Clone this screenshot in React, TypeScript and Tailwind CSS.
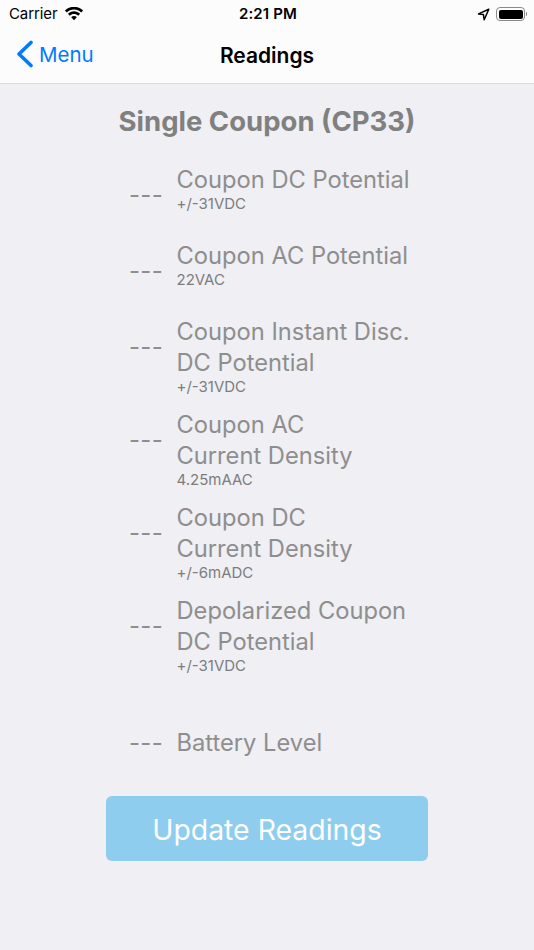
const readings = [
  { lines: ['Coupon DC Potential'], range: '+/-31VDC', tall: false },
  { lines: ['Coupon AC Potential'], range: '22VAC', tall: false },
  { lines: ['Coupon Instant Disc.', 'DC Potential'], range: '+/-31VDC', tall: true },
  { lines: ['Coupon AC', 'Current Density'], range: '4.25mAAC', tall: true },
  { lines: ['Coupon DC', 'Current Density'], range: '+/-6mADC', tall: true },
  { lines: ['Depolarized Coupon', 'DC Potential'], range: '+/-31VDC', tall: true },
]

function Wifi() {
  return (
    <svg width="20" height="15" viewBox="0 0 20 15" fill="#000">
      <path d="M10 2.600c2.800 0 5.300 1.100 7.200 2.900l1.900-2C16.700 1.100 13.500-.2 10-.2S3.300 1.100.900 3.500l1.900 2C4.700 3.700 7.200 2.600 10 2.600z" />
      <path d="M10 7.100c1.600 0 3.100.6 4.200 1.700l1.900-2C14.500 5.200 12.400 4.300 10 4.300S5.500 5.200 3.900 6.800l1.900 2C6.900 7.700 8.400 7.100 10 7.100z" />
      <path d="M10 9.100c-1.100 0-2.100.4-2.800 1.200L10 13.300l2.800-3c-.7-.8-1.700-1.200-2.800-1.200z" />
    </svg>
  )
}

function LocationArrow() {
  return (
    <svg width="13" height="13" viewBox="0 0 13 13" fill="none" stroke="#000" strokeWidth="1.500" strokeLinejoin="round">
      <path d="M11.800 1.200 1.500 5.900l4.900.7.800 5.200z" />
    </svg>
  )
}

function Battery() {
  return (
    <div className="flex items-center">
      <div className="w-[29px] h-[14px] rounded-[4px] border border-[#8a8a8a] p-[1.500px]">
        <div className="w-full h-full rounded-[2px] bg-black" />
      </div>
      <div className="w-[1.500px] h-[4px] bg-[#8a8a8a] rounded-r-sm ml-[0.500px]" />
    </div>
  )
}

export default function App() {
  return (
    <div className="w-[534px] h-[950px] bg-[#efeff4] flex flex-col font-['Inter',sans-serif] overflow-hidden">
      {/* Barra de status + navegacao */}
      <div className="bg-[#fcfcfc] border-b border-[#d9d9dc] h-[84px] shrink-0 flex flex-col">
        <div className="h-[28px] flex items-center pl-[9px] pr-[7px] text-black">
          <div className="flex-1 flex items-center gap-[7px]">
            <span className="text-[15px] tracking-[-0.100px]">Carrier</span>
            <Wifi />
          </div>
          <span className="text-[15px] font-semibold tracking-[0.150px]">2:21 PM</span>
          <div className="flex-1 flex items-center justify-end gap-[6px]">
            <LocationArrow />
            <Battery />
          </div>
        </div>
        <div className="relative flex-1 flex items-center justify-center">
          <div className="absolute left-[16px] top-[12px] flex items-center gap-[5px] text-[#007aff]">
            <svg width="18" height="28" viewBox="0 0 18 28" fill="none" stroke="#007aff" strokeWidth="3.600" strokeLinecap="round" strokeLinejoin="round">
              <path d="M15 2.500 3 14l12 11.500" />
            </svg>
            <span className="text-[20.500px] leading-[26px] mt-[1px]">Menu</span>
          </div>
          <span className="text-[21px] font-semibold text-black">Readings</span>
        </div>
      </div>

      <div className="flex-1 flex flex-col items-center">
        <h1 className="mt-[19px] h-[36px] text-[27.500px] leading-[36px] font-bold text-[#808080]">Single Coupon (CP33)</h1>

        <div className="w-full mt-[25px] pl-[130px]">
          {readings.map(r => (
            <div key={r.lines[0]} className={`flex items-start gap-[15px] ${r.tall ? 'h-[93px]' : 'h-[76px]'}`}>
              <span className="w-[32px] mt-[16px] text-[24px] leading-[30px] text-[#8e8e8e] tracking-[0.300px] whitespace-nowrap -ml-[1px] mr-[1px]">---</span>
              <div className="flex flex-col pt-[1px] -ml-[0.500px]">
                {r.lines.map(line => (
                  <span key={line} className="text-[23.700px] leading-[30.500px] text-[#8e8e8e] whitespace-nowrap">{line}</span>
                ))}
                <span className="text-[15px] leading-[16px] mt-[0.500px] text-[#7d7d7d]">{r.range}</span>
              </div>
            </div>
          ))}

          <div className="flex items-center gap-[15px] mt-[40px] h-[30px]">
            <span className="w-[32px] text-[24px] leading-[30px] text-[#8e8e8e] tracking-[0.300px] whitespace-nowrap -ml-[1px] mr-[1px]">---</span>
            <span className="text-[23.700px] leading-[30px] text-[#8e8e8e] -ml-[0.500px]">Battery Level</span>
          </div>
        </div>

        <button className="mt-[38px] w-[322px] h-[65px] pt-[3px] rounded-[6px] bg-[#8ecdee] text-white text-[28.400px]">
          Update Readings
        </button>
      </div>
    </div>
  )
}
